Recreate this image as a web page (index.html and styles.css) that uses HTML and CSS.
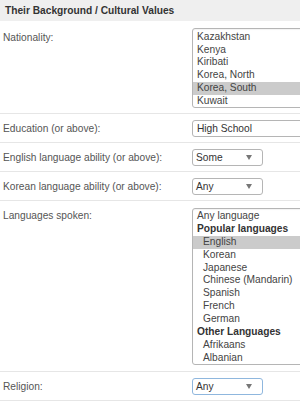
FILE: index.html
```html
<!DOCTYPE html>
<html>
<head>
<meta charset="utf-8">
<link rel="stylesheet" href="styles.css">
</head>
<body>
<div class="panel">
  <div class="head">Their Background / Cultural Values</div>

  <div class="row row-list row-nat">
    <div class="label">Nationality:</div>
    <div class="listbox">
      <div class="opt">Kazakhstan</div>
      <div class="opt">Kenya</div>
      <div class="opt">Kiribati</div>
      <div class="opt">Korea, North</div>
      <div class="opt sel">Korea, South</div>
      <div class="opt">Kuwait</div>
    </div>
  </div>

  <div class="row">
    <div class="label">Education (or above):</div>
    <div class="textbox">High School</div>
  </div>

  <div class="row">
    <div class="label">English language ability (or above):</div>
    <div class="select"><span>Some</span><span class="arrow"></span></div>
  </div>

  <div class="row">
    <div class="label">Korean language ability (or above):</div>
    <div class="select"><span>Any</span><span class="arrow"></span></div>
  </div>

  <div class="row row-list row-lang">
    <div class="label">Languages spoken:</div>
    <div class="listbox">
      <div class="opt">Any language</div>
      <div class="opt grp">Popular languages</div>
      <div class="opt ind sel">English</div>
      <div class="opt ind">Korean</div>
      <div class="opt ind">Japanese</div>
      <div class="opt ind">Chinese (Mandarin)</div>
      <div class="opt ind">Spanish</div>
      <div class="opt ind">French</div>
      <div class="opt ind">German</div>
      <div class="opt grp">Other Languages</div>
      <div class="opt ind">Afrikaans</div>
      <div class="opt ind">Albanian</div>
    </div>
  </div>

  <div class="row">
    <div class="label">Religion:</div>
    <div class="select focus"><span>Any</span><span class="arrow"></span></div>
  </div>
</div>
</body>
</html>
```

FILE: styles.css
```css
html, body {
  margin: 0;
  padding: 0;
  background: #ffffff;
  overflow: hidden;
}
body {
  width: 300px;
  height: 401px;
  font-family: "Liberation Sans", Arial, sans-serif;
  font-size: 10.2px;
  color: #555;
}
.panel {
  width: 300px;
  overflow: hidden;
}
.head {
  background: #efefef;
  color: #333;
  font-weight: bold;
  font-size: 10.2px;
  height: 21px;
  line-height: 21px;
  padding-left: 5px;
}
.row {
  display: flex;
  align-items: flex-start;
  padding: 5.5px 0 5.5px 3px;
  border-bottom: 1px solid #e6e6e6;
}
.row-list {
  padding-top: 6px;
  padding-bottom: 7px;
}
.row-nat {
  padding-top: 6.5px;
  padding-bottom: 5px;
}
.row-nat .listbox {
  padding-top: 2.5px;
}
.row-nat .label {
  margin-top: 1px;
}
.row-lang {
  padding-top: 7px;
  padding-bottom: 6px;
}
.row-lang .opt {
  line-height: 12.85px;
}
.label {
  width: 189px;
  flex: none;
  line-height: 17px;
  color: #555;
}
.row-lang .label {
  margin-top: -1px;
}
.listbox {
  flex: none;
  width: 130px;
  border: 1px solid #b5b5b5;
  border-radius: 3px;
  padding: 1px 0 0 0;
  color: #444;
  box-shadow: inset 0 1px 1px rgba(0,0,0,0.05);
}
.opt {
  line-height: 12.7px;
  padding-left: 4px;
  white-space: nowrap;
}
.opt.grp {
  font-weight: bold;
  color: #333;
}
.opt.ind {
  padding-left: 10px;
}
.opt.sel {
  background: #cbcbcb;
}
.textbox {
  flex: none;
  width: 130px;
  height: 15px;
  line-height: 15px;
  border: 1px solid #b5b5b5;
  border-radius: 3px;
  padding-left: 4px;
  color: #333;
}
.select {
  flex: none;
  width: 66px;
  height: 15px;
  line-height: 15px;
  border: 1px solid #b5b5b5;
  border-radius: 3px;
  padding-left: 3px;
  display: flex;
  align-items: center;
  justify-content: space-between;
  color: #333;
}
.select.focus {
  border-color: #8fb7de;
}
.arrow {
  width: 0;
  height: 0;
  border-left: 3.5px solid transparent;
  border-right: 3.5px solid transparent;
  border-top: 5px solid #777;
  margin-right: 10px;
}
```
